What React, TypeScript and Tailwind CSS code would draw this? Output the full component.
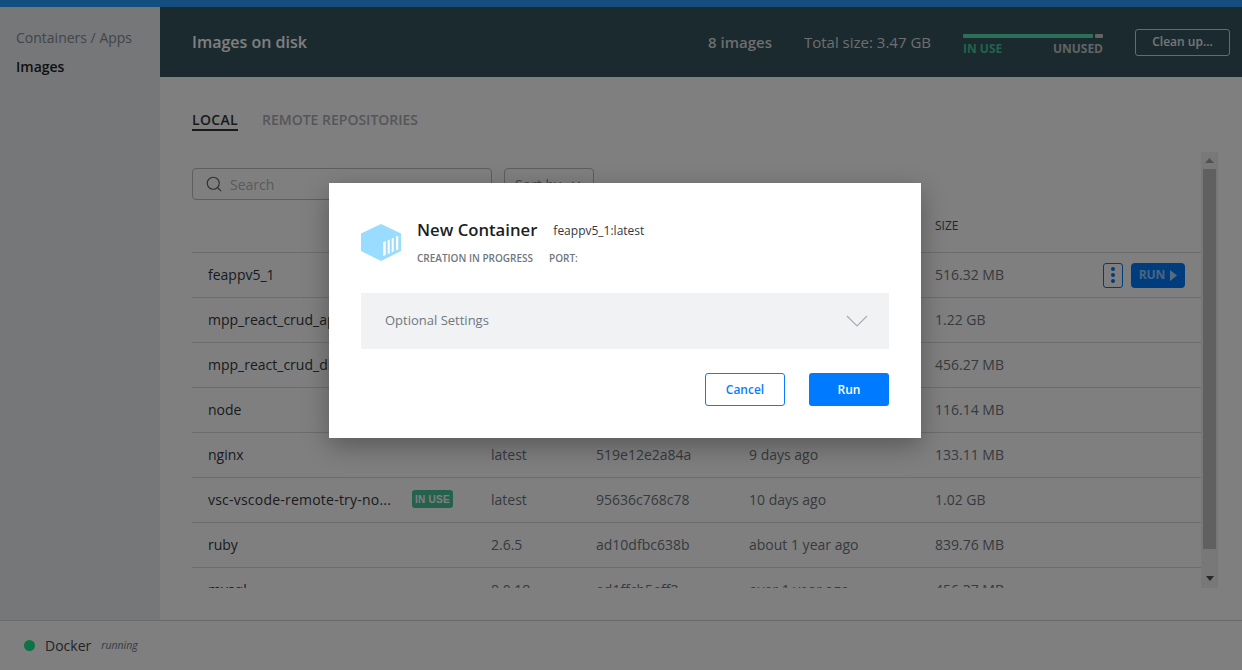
import { Search, ChevronDown } from 'lucide-react';

interface ImageRow {
  name: string;
  tag: string;
  id: string;
  created: string;
  size: string;
  inUse?: boolean;
}

const rows: ImageRow[] = [
  { name: 'feappv5_1', tag: 'latest', id: 'a6d3f1c07b52', created: '1 minute ago', size: '516.32 MB' },
  { name: 'mpp_react_crud_api', tag: 'latest', id: '3be91d07c4aa', created: '2 days ago', size: '1.22 GB' },
  { name: 'mpp_react_crud_db', tag: 'latest', id: '71ac40e9d2f6', created: '2 days ago', size: '456.27 MB' },
  { name: 'node', tag: 'latest', id: 'c5e8a21f90d3', created: '9 days ago', size: '116.14 MB' },
  { name: 'nginx', tag: 'latest', id: '519e12e2a84a', created: '9 days ago', size: '133.11 MB' },
  { name: 'vsc-vscode-remote-try-no...', tag: 'latest', id: '95636c768c78', created: '10 days ago', size: '1.02 GB', inUse: true },
  { name: 'ruby', tag: '2.6.5', id: 'ad10dfbc638b', created: 'about 1 year ago', size: '839.76 MB' },
  { name: 'mysql', tag: '8.0.18', id: 'ed1ffcb5eff3', created: 'over 1 year ago', size: '456.37 MB' },
];

function Table() {
  return (
    <div className="flex-1 min-w-0 h-full overflow-hidden">
      <div className="h-[16px]" />
      <div className="flex items-center h-[84px] pt-[32px] pl-[743px] text-[12px] text-[#4a4f55]">
        SIZE
      </div>
      {rows.map((row) => (
        <div key={row.name} className="flex items-center h-[45px] pl-[16px] pb-[2px] border-t border-[#d8d9da] text-[14px] text-[#6e757c]">
          <div className="w-[283px] flex items-center text-[#33383d]">
            <span className={row.inUse ? 'w-[204px] whitespace-nowrap tracking-[0.22px]' : 'w-[204px] truncate'}>{row.name}</span>
            {row.inUse && (
              <span className="w-[41px] h-[18px] rounded-[3px] bg-[#48c49a] flex items-center justify-center text-white text-[10px] font-bold font-['Liberation_Sans',sans-serif] tracking-[0.3px]">
                IN USE
              </span>
            )}
          </div>
          <span className="w-[105px]">{row.tag}</span>
          <span className="w-[153px]">{row.id}</span>
          <span className="w-[186px]">{row.created}</span>
          <span>{row.size}</span>
          {row.name === 'feappv5_1' && (
            <div className="ml-auto mr-[16px] mt-[2px] flex items-center gap-[8px]">
              <button className="w-[20px] h-[25px] rounded-[3px] border border-[#007bff] flex flex-col items-center justify-center gap-[2px]">
                <span className="w-[4px] h-[4px] rounded-full bg-[#007bff]" />
                <span className="w-[4px] h-[4px] rounded-full bg-[#007bff]" />
                <span className="w-[4px] h-[4px] rounded-full bg-[#007bff]" />
              </button>
              <button className="w-[54px] h-[25px] rounded-[4px] bg-[#007bff] flex items-center justify-center gap-[5px] text-white/60 text-[12px] font-bold">
                RUN
                <svg width="7" height="11" viewBox="0 0 7 11" className="fill-white/70">
                  <path d="M0 0 L7 5.5 L0 11 Z" />
                </svg>
              </button>
            </div>
          )}
        </div>
      ))}
    </div>
  );
}

function Scrollbar() {
  return (
    <div className="w-[17px] h-full bg-[#f1f1f1] flex flex-col items-center shrink-0">
      <div className="h-[17px] flex items-center justify-center">
        <svg width="9" height="5" viewBox="0 0 9 5" className="fill-[#a3a3a3]"><path d="M4.5 0 L9 5 L0 5 Z" /></svg>
      </div>
      <div className="w-[13px] h-[380px] bg-[#c1c1c1]" />
      <div className="flex-1 flex items-end pb-[7px]">
        <svg width="8" height="5" viewBox="0 0 8 5" className="fill-[#505050]"><path d="M0 0 L8 0 L4 5 Z" /></svg>
      </div>
    </div>
  );
}

function ContainerIcon() {
  return (
    <svg width="40" height="37" viewBox="0 0 40 37" className="shrink-0">
      <path d="M20 0 L40 9.5 L40 27 L20 37 L0 27 L0 9.5 Z" fill="#99dcff" />
      <path d="M22.3 18 L24.7 17.2 L24.7 31 L22.3 32 Z M26.7 16.2 L28.7 15.4 L28.7 29.2 L26.7 30 Z M30.7 14.6 L32.7 13.8 L32.7 27.6 L30.7 28.4 Z M35 12.6 L37.3 11.8 L37.3 25.6 L35 26.4 Z" fill="#ffffff" />
    </svg>
  );
}

function NewContainerDialog() {
  return (
    <div className="absolute left-[329px] top-[183px] w-[592px] h-[255px] bg-white shadow-[0_8px_24px_rgba(0,0,0,0.3)] px-[32px] pt-[36px]">
      <div className="flex items-start gap-[16px] h-[74px] pt-[5px]">
        <ContainerIcon />
        <div className="-mt-[7px]">
          <div className="flex items-baseline gap-[16px]">
            <span className="text-[16.7px] font-semibold text-[#1b1f23]">New Container</span>
            <span className="text-[12px] text-[#33383d] -translate-y-px">feappv5_1:latest</span>
          </div>
          <div className="flex gap-[16px] mt-[9px] text-[10px] font-semibold text-[#6f7780]">
            <span>CREATION IN PROGRESS</span>
            <span>PORT:</span>
          </div>
        </div>
      </div>
      <div className="h-[56px] bg-[#f1f2f4] flex items-center justify-between pl-[24px] pr-[21px] text-[13px] text-[#6f7780]">
        Optional Settings
        <svg width="22" height="12" viewBox="0 0 22 12" fill="none" stroke="#a8adb3" strokeWidth="1.2">
          <path d="M1 1 L11 11 L21 1" />
        </svg>
      </div>
      <div className="flex justify-end gap-[24px] mt-[24px]">
        <button className="w-[80px] h-[33px] rounded-[3px] border border-[#0a7cff] text-[#0a7cff] text-[12px] font-semibold">Cancel</button>
        <button className="w-[80px] h-[33px] rounded-[3px] bg-[#007bff] text-white text-[12px] font-semibold">Run</button>
      </div>
    </div>
  );
}

export default function App() {
  return (
    <div className="relative w-full h-[670px] overflow-hidden bg-white flex flex-col font-['Open_Sans',sans-serif]">
      <div className="h-[7px] bg-[#269cfe] shrink-0" />

      <div className="flex flex-1 min-h-0">
        <aside className="w-[160px] shrink-0 bg-[#eaeef3] pt-[20px] pl-[16px] text-[14px]">
          <div className="h-[29px] text-[#848b92] leading-[22px]">Containers / Apps</div>
          <div className="font-semibold text-[#1e2226] leading-[22px]">Images</div>
        </aside>

        <main className="flex-1 min-w-0 flex flex-col">
          <header className="h-[70px] shrink-0 bg-[#34555e] flex items-center pl-[32px] pr-[12px] text-white">
            <h1 className="text-[16px] font-semibold">Images on disk</h1>
            <span className="ml-auto text-[15px] font-semibold text-[#dcdcdc]">8 images</span>
            <span className="ml-[32px] text-[15px] text-[#dcdcdc]">Total size: 3.47 GB</span>
            <div className="ml-[32px] w-[140px] self-start mt-[27px]">
              <div className="flex gap-[2px] h-[4px]">
                <div className="w-[130px] bg-[#58e0b4] rounded-[1px]" />
                <div className="flex-1 bg-[#c8c8c8] rounded-[1px]" />
              </div>
              <div className="flex justify-between mt-[3px] text-[12px] font-bold leading-[16px]">
                <span className="text-[#48c49a]">IN USE</span>
                <span className="text-[#c2c6c9]">UNUSED</span>
              </div>
            </div>
            <button className="ml-[32px] w-[95px] h-[27px] rounded-[3px] border border-[#d0d4d6] text-[12px] font-semibold text-white/90">
              Clean up...
            </button>
          </header>

          <div className="flex-1 min-h-0 pl-[32px] pr-[24px] pt-[33px] pb-[32px] flex flex-col">
            <div className="flex gap-[24px] text-[14px] font-semibold h-[42px] shrink-0">
              <span className="w-[46px] h-[21px] leading-[20px] tracking-[0.3px] border-b-2 border-[#30363b] text-[#30363b]">LOCAL</span>
              <span className="leading-[20px] text-[#a9adb2]">REMOTE REPOSITORIES</span>
            </div>
            <div className="relative flex-1 min-h-0 flex">
              <div className="absolute left-0 top-[16px] flex gap-[12px]">
                <div className="w-[300px] h-[32px] rounded-[4px] border border-[#b8bcc0] flex items-center pl-[12px] gap-[7px] text-[14px] text-[#b0b4b8]">
                  <Search size={18} strokeWidth={1.5} className="text-[#5f6368]" />
                  Search
                </div>
                <div className="w-[90px] h-[32px] rounded-[4px] border border-[#b8bcc0] flex items-center justify-between px-[10px] text-[14px] text-[#8a8f94]">
                  Sort by
                  <ChevronDown size={14} />
                </div>
              </div>
              <Table />
              <Scrollbar />
            </div>
          </div>
        </main>
      </div>

      <footer className="h-[50px] shrink-0 border-t border-[#d4d6d8] flex items-center pl-[24px] bg-white">
        <span className="w-[11px] h-[11px] rounded-full bg-[#16e68c]" />
        <span className="ml-[10px] text-[14px] text-[#43484d]">Docker</span>
        <span className="ml-[10px] text-[10.5px] italic text-[#6e757c]">running</span>
      </footer>

      <div className="absolute inset-0 bg-black/50" />
      <NewContainerDialog />
    </div>
  );
}
